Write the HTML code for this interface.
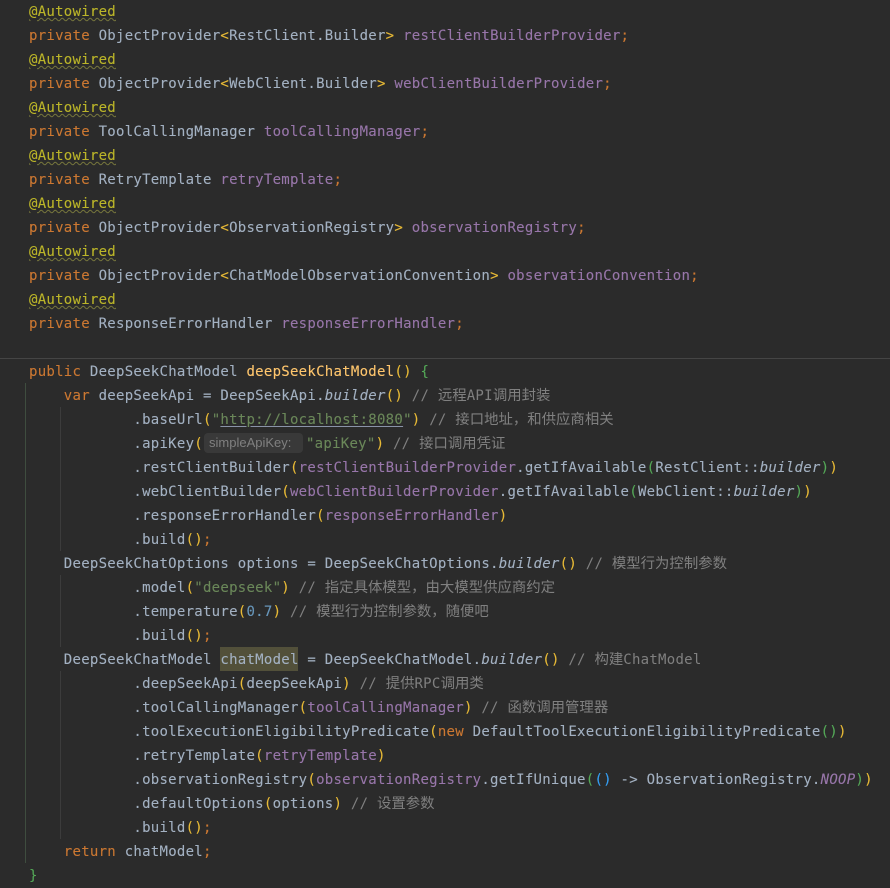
<!DOCTYPE html>
<html>
<head>
<meta charset="utf-8">
<style>
html,body{margin:0;padding:0;background:#2b2b2b;width:890px;height:888px;overflow:hidden}
#code{position:absolute;left:29px;top:0;margin:0;font-family:"DejaVu Sans Mono","Liberation Mono",monospace;font-size:14px;letter-spacing:.27px;color:#a3b1c2;z-index:2;-webkit-text-stroke:.1px}
.l{height:24px;line-height:24px;white-space:pre}
.k{color:#cc7832}
.a{color:#bbb529;text-decoration:underline wavy #77773c 1px;text-underline-offset:1px}
.f{color:#9876aa}
.m{color:#ffc66d}
.s{color:#6a8759}
.u{text-decoration:underline;text-decoration-color:#8a93a8;text-underline-offset:2px}
.n{color:#6897bb}
.c{color:#808080;-webkit-text-stroke:0}
.z{font-family:"Noto Sans CJK SC","WenQuanYi Zen Hei",sans-serif;font-size:14.4px;letter-spacing:0;line-height:0}
.y{color:#e8ba36}
.g{color:#54a857}
.b{color:#359ff4}
.i{font-style:italic}
.h{display:inline-block;width:103px;height:0}
.hint{position:absolute;left:204px;top:433px;width:99px;height:20px;background:#393939;border-radius:4px;color:#808080;font:13px/20px "Liberation Sans",sans-serif;text-indent:5px;z-index:3}
.mark{position:absolute;left:220px;top:647px;width:78px;height:24px;background:#52503a;z-index:1}
.sep{position:absolute;left:0;top:358px;width:890px;height:1px;background:#454545}
.v{position:absolute;width:1px;z-index:1}
</style>
</head>
<body>
<div class="sep"></div>
<div class="v" style="left:25px;top:383px;height:480px;background:#3f4d3f"></div>
<div class="v" style="left:60px;top:407px;height:144px;background:#3c3c3c"></div>
<div class="v" style="left:60px;top:575px;height:72px;background:#3c3c3c"></div>
<div class="v" style="left:60px;top:671px;height:168px;background:#3c3c3c"></div>
<div class="mark"></div>
<div class="hint">simpleApiKey:</div>
<div id="code">
<div class="l"><span class="a">@Autowired</span></div>
<div class="l"><span class="k">private</span> ObjectProvider<span class="y">&lt;</span>RestClient.Builder<span class="y">&gt;</span> <span class="f">restClientBuilderProvider</span><span class="k">;</span></div>
<div class="l"><span class="a">@Autowired</span></div>
<div class="l"><span class="k">private</span> ObjectProvider<span class="y">&lt;</span>WebClient.Builder<span class="y">&gt;</span> <span class="f">webClientBuilderProvider</span><span class="k">;</span></div>
<div class="l"><span class="a">@Autowired</span></div>
<div class="l"><span class="k">private</span> ToolCallingManager <span class="f">toolCallingManager</span><span class="k">;</span></div>
<div class="l"><span class="a">@Autowired</span></div>
<div class="l"><span class="k">private</span> RetryTemplate <span class="f">retryTemplate</span><span class="k">;</span></div>
<div class="l"><span class="a">@Autowired</span></div>
<div class="l"><span class="k">private</span> ObjectProvider<span class="y">&lt;</span>ObservationRegistry<span class="y">&gt;</span> <span class="f">observationRegistry</span><span class="k">;</span></div>
<div class="l"><span class="a">@Autowired</span></div>
<div class="l"><span class="k">private</span> ObjectProvider<span class="y">&lt;</span>ChatModelObservationConvention<span class="y">&gt;</span> <span class="f">observationConvention</span><span class="k">;</span></div>
<div class="l"><span class="a">@Autowired</span></div>
<div class="l"><span class="k">private</span> ResponseErrorHandler <span class="f">responseErrorHandler</span><span class="k">;</span></div>
<div class="l"></div>
<div class="l"><span class="k">public</span> DeepSeekChatModel <span class="m">deepSeekChatModel</span><span class="y">()</span> <span class="g">{</span></div>
<div class="l">    <span class="k">var</span> deepSeekApi = DeepSeekApi.<span class="i">builder</span><span class="y">()</span> <span class="c">// <span class="z">远程</span>API<span class="z">调用封装</span></span></div>
<div class="l">            .baseUrl<span class="y">(</span><span class="s">"<span class="u">http://localhost:8080</span>"</span><span class="y">)</span> <span class="c">// <span class="z">接口地址，和供应商相关</span></span></div>
<div class="l">            .apiKey<span class="y">(</span><span class="h"></span><span class="s">"apiKey"</span><span class="y">)</span> <span class="c">// <span class="z">接口调用凭证</span></span></div>
<div class="l">            .restClientBuilder<span class="y">(</span><span class="f">restClientBuilderProvider</span>.getIfAvailable<span class="g">(</span>RestClient::<span class="i">builder</span><span class="g">)</span><span class="y">)</span></div>
<div class="l">            .webClientBuilder<span class="y">(</span><span class="f">webClientBuilderProvider</span>.getIfAvailable<span class="g">(</span>WebClient::<span class="i">builder</span><span class="g">)</span><span class="y">)</span></div>
<div class="l">            .responseErrorHandler<span class="y">(</span><span class="f">responseErrorHandler</span><span class="y">)</span></div>
<div class="l">            .build<span class="y">()</span><span class="k">;</span></div>
<div class="l">    DeepSeekChatOptions options = DeepSeekChatOptions.<span class="i">builder</span><span class="y">()</span> <span class="c">// <span class="z">模型行为控制参数</span></span></div>
<div class="l">            .model<span class="y">(</span><span class="s">"deepseek"</span><span class="y">)</span> <span class="c">// <span class="z">指定具体模型，由大模型供应商约定</span></span></div>
<div class="l">            .temperature<span class="y">(</span><span class="n">0.7</span><span class="y">)</span> <span class="c">// <span class="z">模型行为控制参数，随便吧</span></span></div>
<div class="l">            .build<span class="y">()</span><span class="k">;</span></div>
<div class="l">    DeepSeekChatModel chatModel = DeepSeekChatModel.<span class="i">builder</span><span class="y">()</span> <span class="c">// <span class="z">构建</span>ChatModel</span></div>
<div class="l">            .deepSeekApi<span class="y">(</span>deepSeekApi<span class="y">)</span> <span class="c">// <span class="z">提供</span>RPC<span class="z">调用类</span></span></div>
<div class="l">            .toolCallingManager<span class="y">(</span><span class="f">toolCallingManager</span><span class="y">)</span> <span class="c">// <span class="z">函数调用管理器</span></span></div>
<div class="l">            .toolExecutionEligibilityPredicate<span class="y">(</span><span class="k">new</span> DefaultToolExecutionEligibilityPredicate<span class="g">()</span><span class="y">)</span></div>
<div class="l">            .retryTemplate<span class="y">(</span><span class="f">retryTemplate</span><span class="y">)</span></div>
<div class="l">            .observationRegistry<span class="y">(</span><span class="f">observationRegistry</span>.getIfUnique<span class="g">(</span><span class="b">()</span> -&gt; ObservationRegistry.<span class="f i">NOOP</span><span class="g">)</span><span class="y">)</span></div>
<div class="l">            .defaultOptions<span class="y">(</span>options<span class="y">)</span> <span class="c">// <span class="z">设置参数</span></span></div>
<div class="l">            .build<span class="y">()</span><span class="k">;</span></div>
<div class="l">    <span class="k">return</span> chatModel<span class="k">;</span></div>
<div class="l"><span class="g">}</span></div>
</div>
</body>
</html>
